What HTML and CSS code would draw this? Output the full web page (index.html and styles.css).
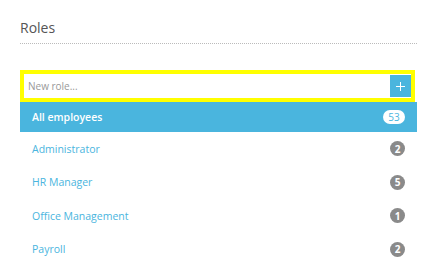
FILE: index.html
```html
<!DOCTYPE html>
<html lang="en">
<head>
    <meta charset="UTF-8">
    <meta name="viewport" content="width=device-width, initial-scale=1.0">
    <title>Roles</title>
    <link rel="stylesheet" href="styles.css">
</head>
<body>
    <div class="roles-panel">
        <h2 class="panel-title">Roles</h2>

        <!-- Новая роль -->
        <div class="new-role">
            <input class="new-role-input" type="text" placeholder="New role...">
            <button class="new-role-btn" type="button">
                <svg width="9" height="9" viewBox="0 0 9 9">
                    <path d="M4.5 0V9M0 4.5H9" stroke="#fff" stroke-width="1" fill="none"/>
                </svg>
            </button>
        </div>

        <!-- Список ролей -->
        <ul class="role-list">
            <li class="role active">
                <span class="role-name">All employees</span>
                <span class="count">53</span>
            </li>
            <li class="role">
                <span class="role-name">Administrator</span>
                <span class="count">2</span>
            </li>
            <li class="role">
                <span class="role-name">HR Manager</span>
                <span class="count">5</span>
            </li>
            <li class="role">
                <span class="role-name">Office Management</span>
                <span class="count">1</span>
            </li>
            <li class="role">
                <span class="role-name">Payroll</span>
                <span class="count">2</span>
            </li>
        </ul>
    </div>
</body>
</html>
```

FILE: styles.css
```css
* {
    margin: 0;
    padding: 0;
    box-sizing: border-box;
    font-family: "Open Sans", Arial, sans-serif;
}

body {
    background-color: #fff;
    color: #555;
    padding-left: 20px;
}

.roles-panel {
    width: 397px;
}

.panel-title {
    font-size: 14px;
    font-weight: 400;
    line-height: 20px;
    color: #555;
    padding-top: 18px;
    padding-bottom: 5px;
    border-bottom: 1px dotted #bbb;
}

/* Новая роль */
.new-role {
    display: flex;
    width: 395px;
    height: 32px;
    margin-top: 26px;
    padding: 1px 0 1px 0;
    border: 4px solid #ffff00;
    background: #fff;
}

.new-role-input {
    flex: 1;
    border: none;
    outline: none;
    padding-left: 4px;
    font-size: 10px;
    color: #555;
}

.new-role-input::placeholder {
    color: #999;
}

.new-role-btn {
    width: 21px;
    border: none;
    background: #4ab5de;
    display: flex;
    align-items: center;
    justify-content: center;
    cursor: pointer;
}

/* Список ролей */
.role-list {
    list-style: none;
}

.role {
    display: flex;
    align-items: center;
    justify-content: space-between;
    height: 33.5px;
    padding: 0 12px;
    font-size: 10.5px;
    color: #4ab5de;
    cursor: pointer;
}

.role.active {
    height: 30px;
    padding-bottom: 1px;
    background: #4ab5de;
    color: #fff;
    font-weight: 600;
}

.count {
    display: inline-flex;
    align-items: center;
    justify-content: center;
    min-width: 15px;
    height: 15px;
    border-radius: 8px;
    background: #8a8a8a;
    color: #fff;
    font-size: 10px;
    font-weight: 700;
}

.role.active .count {
    min-width: 22px;
    height: 14px;
    background: #fff;
    color: #4ab5de;
    font-weight: 400;
}
```
